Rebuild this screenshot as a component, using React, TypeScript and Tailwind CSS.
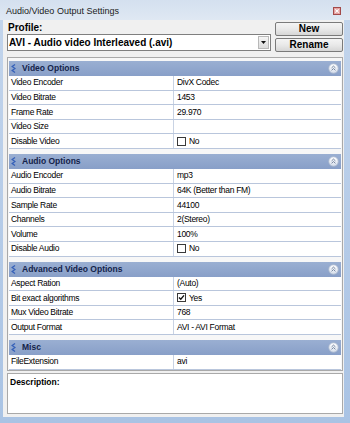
import React from 'react'

type TRow = { name: string; value: string; check?: boolean }
type TSection = { title: string; rows: TRow[] }

const sections: TSection[] = [
  {
    title: 'Video Options',
    rows: [
      { name: 'Video Encoder', value: 'DivX Codec' },
      { name: 'Video Bitrate', value: '1453' },
      { name: 'Frame Rate', value: '29.970' },
      { name: 'Video Size', value: '' },
      { name: 'Disable Video', value: 'No', check: false },
    ],
  },
  {
    title: 'Audio Options',
    rows: [
      { name: 'Audio Encoder', value: 'mp3' },
      { name: 'Audio Bitrate', value: '64K (Better than FM)' },
      { name: 'Sample Rate', value: '44100' },
      { name: 'Channels', value: '2(Stereo)' },
      { name: 'Volume', value: '100%' },
      { name: 'Disable Audio', value: 'No', check: false },
    ],
  },
  {
    title: 'Advanced Video Options',
    rows: [
      { name: 'Aspect Ration', value: '(Auto)' },
      { name: 'Bit exact algorithms', value: 'Yes', check: true },
      { name: 'Mux Video Bitrate', value: '768' },
      { name: 'Output Format', value: 'AVI - AVI Format' },
    ],
  },
  {
    title: 'Misc',
    rows: [{ name: 'FileExtension', value: 'avi' }],
  },
]

const CategoryIcon = () => (
  <svg width="5" height="9" viewBox="0 0 5 9" className="shrink-0">
    <path d="M4 0.5 L1.2 2.5 L4 4.5 L1.2 6.5 L4 8.5" fill="none" stroke="#3560b8" strokeWidth="1.3" />
  </svg>
)

const CollapseIcon = () => (
  <svg width="11" height="11" viewBox="0 0 11 11" className="shrink-0">
    <defs>
      <linearGradient id="cg" x1="0" y1="0" x2="0" y2="1">
        <stop offset="0" stopColor="#ffffff" />
        <stop offset="1" stopColor="#d6deeb" />
      </linearGradient>
    </defs>
    <circle cx="5.5" cy="5.5" r="4.8" fill="url(#cg)" stroke="#a7b5cd" strokeWidth="0.9" />
    <path d="M3.6 4.9 L5.5 3.1 L7.4 4.9 M3.6 7.3 L5.5 5.5 L7.4 7.3" fill="none" stroke="#74859f" strokeWidth="1" />
  </svg>
)

const CheckBox = ({ checked }: { checked: boolean }) => (
  <span className="flex h-[9px] w-[9px] shrink-0 items-center justify-center border border-[#3a3a3a] bg-white">
    {checked && (
      <svg width="7" height="7" viewBox="0 0 7 7">
        <path d="M1 3.4 L2.8 5.2 L6 1.4" fill="none" stroke="#111" strokeWidth="1.4" />
      </svg>
    )}
  </span>
)

const Row = ({ name, value, check }: TRow) => (
  <div className="flex h-[14.6px] border-b border-[#b9c6dc] bg-white text-[8.5px] tracking-[-0.3px] text-black">
    <div className="flex w-[165px] shrink-0 items-center border-r border-[#c9d3e4] pl-[2px]">{name}</div>
    <div className="flex flex-1 items-center gap-[3px] pl-[3px]">
      {check !== undefined && <CheckBox checked={check} />}
      <span>{value}</span>
    </div>
  </div>
)

const Section = ({ title, rows }: TSection) => (
  <div className="flex flex-col">
    <div className="flex h-[15px] items-center gap-[6px] bg-gradient-to-b from-[#9aafd2] to-[#889fc8] pl-[2px] pr-[2px]">
      <CategoryIcon />
      <span className="flex-1 text-[8.5px] font-bold text-[#14234a]">{title}</span>
      <CollapseIcon />
    </div>
    {rows.map(row => (
      <Row {...row} key={row.name} />
    ))}
  </div>
)

const Button = ({ label }: { label: string }) => (
  <button className="flex h-[14px] w-full items-center justify-center rounded-[2px] border border-[#7a7a7a] bg-gradient-to-b from-[#f4f4f4] via-[#e9e9e9] to-[#d6d6d6] text-[10px] font-bold leading-none text-black">
    {label}
  </button>
)

const App = () => {
  return (
    <div className="flex h-[423px] w-[350px] flex-col bg-gradient-to-b from-[#c3d5ec] to-[#a9c3e4] font-['Liberation_Sans',Arial,sans-serif]">
      <header className="flex h-[20px] shrink-0 items-center bg-gradient-to-b from-[#d4e0ef] to-[#dfe8f3] pl-[6px] pr-[9px] pt-[4px]">
        <span className="flex-1 text-[9px] text-[#1b1b1b]">Audio/Video Output Settings</span>
        <svg width="8" height="8" viewBox="0 0 8 8" className="-mt-[2px]">
          <rect x="0.5" y="0.5" width="7" height="7" fill="#e6a3a3" stroke="#a34a4a" />
          <path d="M2.3 2.3 L5.7 5.7 M5.7 2.3 L2.3 5.7" stroke="#ffffff" strokeWidth="1.1" />
        </svg>
      </header>

      <main className="mb-[6px] ml-[3px] mr-[6px] flex flex-1 flex-col bg-[#f0f0f0] pl-[4px] pr-[1px]">
        <div className="flex gap-[4px]">
          <div className="flex flex-1 flex-col">
            <div className="flex h-[14px] items-center pl-[1px] text-[10px] font-bold text-black">Profile:</div>
            <div className="flex h-[17px] items-center border border-[#7f7f7f] bg-white pl-[1px] pr-[1px]">
              <span className="flex-1 text-[10px] font-bold text-black">AVI - Audio video Interleaved (.avi)</span>
              <span className="flex h-[13px] w-[11px] items-center justify-center border border-[#b8b8b8] bg-gradient-to-b from-[#f5f5f5] to-[#dcdcdc]">
                <svg width="5" height="3" viewBox="0 0 5 3">
                  <path d="M0 0 L5 0 L2.5 3 Z" fill="#111" />
                </svg>
              </span>
            </div>
          </div>
          <div className="flex w-[68px] flex-col gap-[2px] pt-[2px]">
            <Button label="New" />
            <Button label="Rename" />
          </div>
        </div>

        <div className="mt-[5px] flex flex-col gap-[5px] border border-[#a9a9a9] bg-[#f7f7f7] px-px pt-[3px]">
          {sections.map(section => (
            <Section {...section} key={section.title} />
          ))}
        </div>

        <div className="mb-[3px] mt-[2px] flex-1 border border-[#a9a9a9] bg-white px-[2px] pt-[2px] text-[8.5px] font-bold text-black">
          Description:
        </div>
      </main>
    </div>
  )
}

export default App
